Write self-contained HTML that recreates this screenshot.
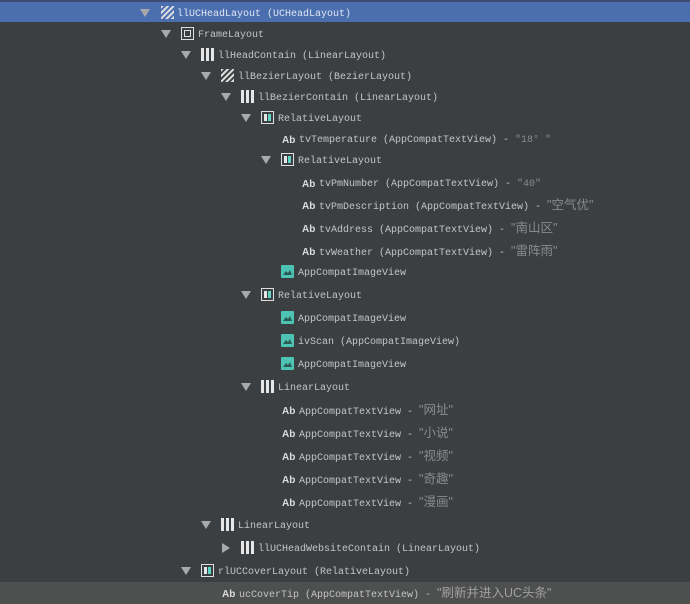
<!DOCTYPE html>
<html><head><meta charset="utf-8"><style>
body{margin:0;width:690px;height:604px;background:#3c3f41;position:relative;overflow:hidden;font-family:"Liberation Mono","Noto Sans CJK SC",monospace;font-size:10px;color:#c4c4c4}
.sel{position:absolute;left:0;top:0;width:690px;height:22px;background:#4b6eaf;border-top:2px solid #3d4b70;box-sizing:border-box}
.last{position:absolute;left:0;top:582px;width:690px;height:22px;background:#4e4f4f}
.r{position:absolute;height:14px;line-height:14px;white-space:nowrap;margin-top:2px}
.t{position:absolute;width:0;height:0;border-left:5px solid transparent;border-right:5px solid transparent;border-top:8px solid #a9a9a9}
.tr{position:absolute;width:0;height:0;border-top:5px solid transparent;border-bottom:5px solid transparent;border-left:8px solid #a9a9a9}
.ic{position:absolute;width:13px;height:13px}
.q{color:#8a8a8a}
.cj{font-family:"Liberation Sans","Noto Sans CJK SC",sans-serif;font-size:12.5px;line-height:10px}
.ab{position:absolute;font-family:"Liberation Sans",sans-serif;font-weight:bold;font-size:10px;color:#dcdcdc;line-height:14px;margin-top:2px}
</style></head><body>
<div class="sel"></div>
<div class="last"></div>

<svg width="0" height="0" style="position:absolute">
<defs>
<pattern id="hp" width="4" height="4" patternUnits="userSpaceOnUse" patternTransform="rotate(45)"><rect width="2" height="4" fill="#e0e0e0"/></pattern>
</defs></svg>

<div class="t" style="left:140px;top:9px"></div>
<svg class="ic" style="left:161px;top:6px"><rect width="13" height="13" fill="url(#hp)"/></svg>
<div class="r" style="left:177px;top:6px;color:#dfe6f3">llUCHeadLayout (UCHeadLayout)</div>

<div class="t" style="left:161px;top:30px"></div>
<svg class="ic" style="left:181px;top:27px"><rect x="0.5" y="0.5" width="12" height="12" fill="none" stroke="#ddd"/><rect x="3.5" y="3.5" width="6" height="6" fill="none" stroke="#ddd"/></svg>
<div class="r" style="left:198px;top:27px">FrameLayout</div>

<div class="t" style="left:181px;top:51px"></div>
<svg class="ic" style="left:201px;top:48px"><rect x="0" width="3" height="13" fill="#e6e6e6"/><rect x="5" width="3" height="13" fill="#e6e6e6"/><rect x="10" width="3" height="13" fill="#e6e6e6"/></svg>
<div class="r" style="left:218px;top:48px">llHeadContain (LinearLayout)</div>

<div class="t" style="left:201px;top:72px"></div>
<svg class="ic" style="left:221px;top:69px"><rect width="13" height="13" fill="url(#hp)"/></svg>
<div class="r" style="left:238px;top:69px">llBezierLayout (BezierLayout)</div>

<div class="t" style="left:221px;top:93px"></div>
<svg class="ic" style="left:241px;top:90px"><rect x="0" width="3" height="13" fill="#e6e6e6"/><rect x="5" width="3" height="13" fill="#e6e6e6"/><rect x="10" width="3" height="13" fill="#e6e6e6"/></svg>
<div class="r" style="left:258px;top:90px">llBezierContain (LinearLayout)</div>

<div class="t" style="left:241px;top:114px"></div>
<svg class="ic" style="left:261px;top:111px"><rect x="0.5" y="0.5" width="12" height="12" fill="none" stroke="#ddd"/><rect x="3" y="3" width="3" height="7" fill="#e6e6e6"/><rect x="7" y="3" width="3" height="7" fill="#5fd3c2"/></svg>
<div class="r" style="left:278px;top:111px">RelativeLayout</div>

<div class="ab" style="left:282px;top:132px">Ab</div>
<div class="r" style="left:299px;top:132px">tvTemperature (AppCompatTextView) - <span class="q">"18° "</span></div>

<div class="t" style="left:261px;top:156px"></div>
<svg class="ic" style="left:281px;top:153px"><rect x="0.5" y="0.5" width="12" height="12" fill="none" stroke="#ddd"/><rect x="3" y="3" width="3" height="7" fill="#e6e6e6"/><rect x="7" y="3" width="3" height="7" fill="#5fd3c2"/></svg>
<div class="r" style="left:298px;top:153px">RelativeLayout</div>

<div class="ab" style="left:302px;top:176px">Ab</div>
<div class="r" style="left:319px;top:176px">tvPmNumber (AppCompatTextView) - <span class="q">"40"</span></div>
<div class="ab" style="left:302px;top:198px">Ab</div>
<div class="r" style="left:319px;top:198px">tvPmDescription (AppCompatTextView) - <span class="q cj">"空气优"</span></div>
<div class="ab" style="left:302px;top:221px">Ab</div>
<div class="r" style="left:319px;top:221px">tvAddress (AppCompatTextView) - <span class="q cj">"南山区"</span></div>
<div class="ab" style="left:302px;top:244px">Ab</div>
<div class="r" style="left:319px;top:244px">tvWeather (AppCompatTextView) - <span class="q cj">"雷阵雨"</span></div>

<svg class="ic" style="left:281px;top:265px"><rect width="13" height="13" rx="1" fill="#4cc3b3"/><path d="M2 10 L5 6 L7 8 L9 5 L11 10 Z" fill="#2b5a55"/></svg>
<div class="r" style="left:298px;top:265px">AppCompatImageView</div>

<div class="t" style="left:241px;top:291px"></div>
<svg class="ic" style="left:261px;top:288px"><rect x="0.5" y="0.5" width="12" height="12" fill="none" stroke="#ddd"/><rect x="3" y="3" width="3" height="7" fill="#e6e6e6"/><rect x="7" y="3" width="3" height="7" fill="#5fd3c2"/></svg>
<div class="r" style="left:278px;top:288px">RelativeLayout</div>

<svg class="ic" style="left:281px;top:311px"><rect width="13" height="13" rx="1" fill="#4cc3b3"/><path d="M2 10 L5 6 L7 8 L9 5 L11 10 Z" fill="#2b5a55"/></svg>
<div class="r" style="left:298px;top:311px">AppCompatImageView</div>
<svg class="ic" style="left:281px;top:334px"><rect width="13" height="13" rx="1" fill="#4cc3b3"/><path d="M2 10 L5 6 L7 8 L9 5 L11 10 Z" fill="#2b5a55"/></svg>
<div class="r" style="left:298px;top:334px">ivScan (AppCompatImageView)</div>
<svg class="ic" style="left:281px;top:357px"><rect width="13" height="13" rx="1" fill="#4cc3b3"/><path d="M2 10 L5 6 L7 8 L9 5 L11 10 Z" fill="#2b5a55"/></svg>
<div class="r" style="left:298px;top:357px">AppCompatImageView</div>

<div class="t" style="left:241px;top:383px"></div>
<svg class="ic" style="left:261px;top:380px"><rect x="0" width="3" height="13" fill="#e6e6e6"/><rect x="5" width="3" height="13" fill="#e6e6e6"/><rect x="10" width="3" height="13" fill="#e6e6e6"/></svg>
<div class="r" style="left:278px;top:380px">LinearLayout</div>

<div class="ab" style="left:282px;top:403px">Ab</div>
<div class="r" style="left:299px;top:403px">AppCompatTextView - <span class="q cj">"网址"</span></div>
<div class="ab" style="left:282px;top:426px">Ab</div>
<div class="r" style="left:299px;top:426px">AppCompatTextView - <span class="q cj">"小说"</span></div>
<div class="ab" style="left:282px;top:449px">Ab</div>
<div class="r" style="left:299px;top:449px">AppCompatTextView - <span class="q cj">"视频"</span></div>
<div class="ab" style="left:282px;top:472px">Ab</div>
<div class="r" style="left:299px;top:472px">AppCompatTextView - <span class="q cj">"奇趣"</span></div>
<div class="ab" style="left:282px;top:495px">Ab</div>
<div class="r" style="left:299px;top:495px">AppCompatTextView - <span class="q cj">"漫画"</span></div>

<div class="t" style="left:201px;top:521px"></div>
<svg class="ic" style="left:221px;top:518px"><rect x="0" width="3" height="13" fill="#e6e6e6"/><rect x="5" width="3" height="13" fill="#e6e6e6"/><rect x="10" width="3" height="13" fill="#e6e6e6"/></svg>
<div class="r" style="left:238px;top:518px">LinearLayout</div>

<div class="tr" style="left:222px;top:543px"></div>
<svg class="ic" style="left:241px;top:541px"><rect x="0" width="3" height="13" fill="#e6e6e6"/><rect x="5" width="3" height="13" fill="#e6e6e6"/><rect x="10" width="3" height="13" fill="#e6e6e6"/></svg>
<div class="r" style="left:258px;top:541px">llUCHeadWebsiteContain (LinearLayout)</div>

<div class="t" style="left:181px;top:567px"></div>
<svg class="ic" style="left:201px;top:564px"><rect x="0.5" y="0.5" width="12" height="12" fill="none" stroke="#ddd"/><rect x="3" y="3" width="3" height="7" fill="#e6e6e6"/><rect x="7" y="3" width="3" height="7" fill="#5fd3c2"/></svg>
<div class="r" style="left:218px;top:564px">rlUCCoverLayout (RelativeLayout)</div>

<div class="ab" style="left:222px;top:586px">Ab</div>
<div class="r" style="left:239px;top:586px">ucCoverTip (AppCompatTextView) - <span class="q cj" style="color:#a0a0a0">"刷新并进入UC头条"</span></div>
</body></html>
